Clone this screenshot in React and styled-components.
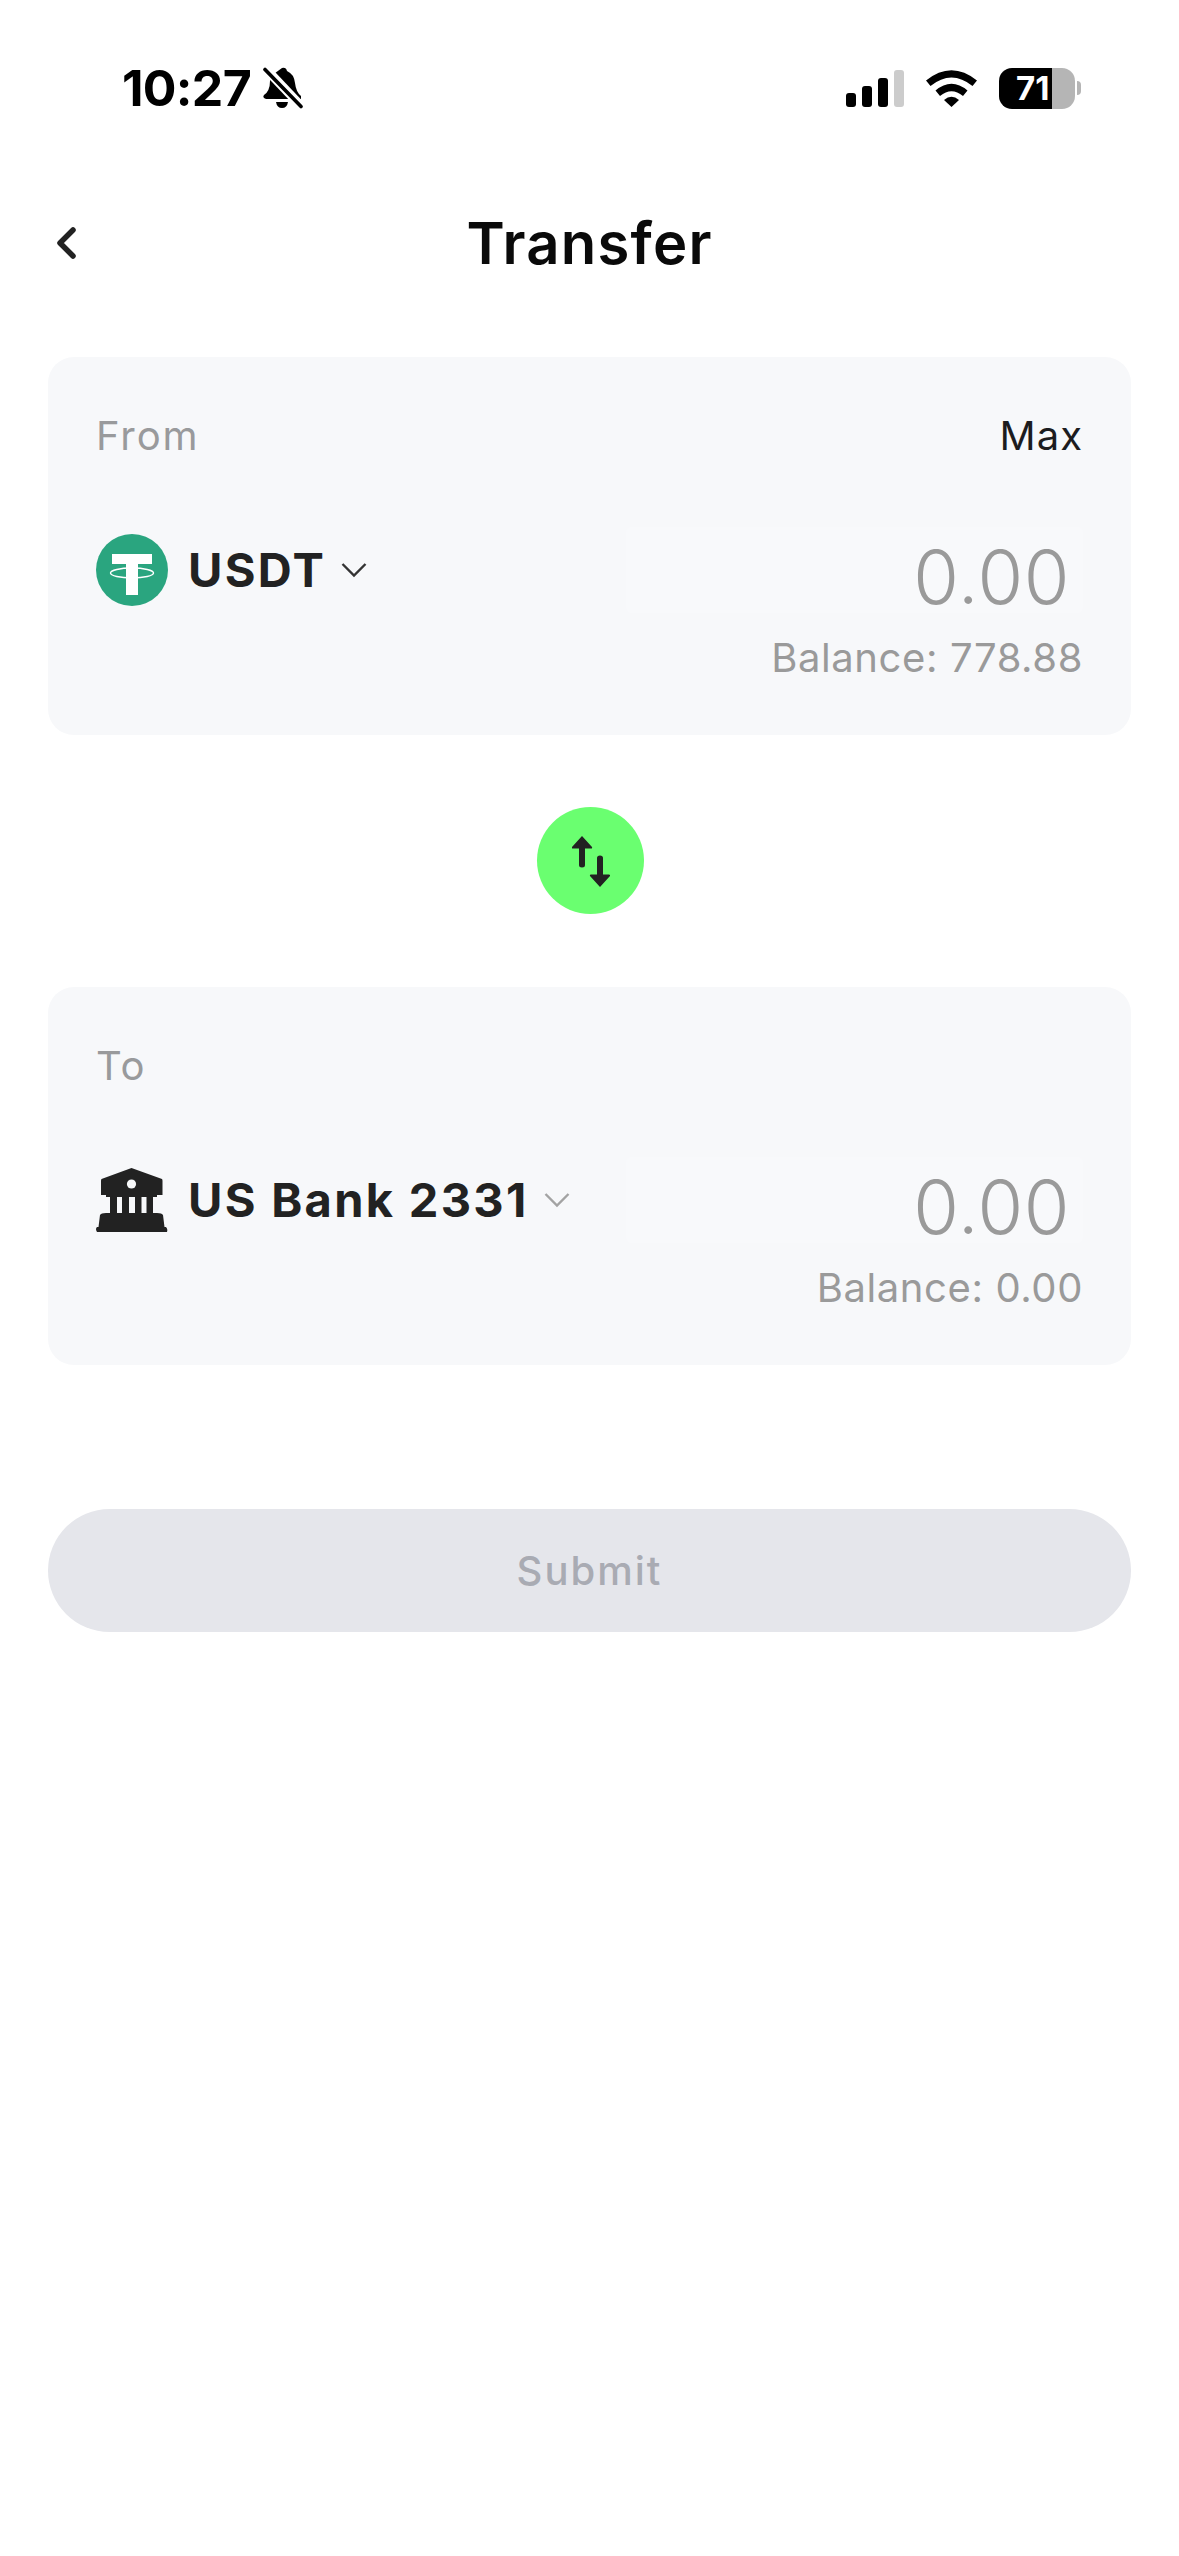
import styled, { createGlobalStyle } from "styled-components";

const GlobalStyle = createGlobalStyle`
  * { box-sizing: border-box; }
  html, body { margin: 0; padding: 0; background: #fff; }
  body { font-family: Inter, "Liberation Sans", sans-serif; }
`;

const Page = styled.div`
  width: 1179px;
  height: 2556px;
  background: #fff;
  overflow: hidden;
`;

const StatusBar = styled.div`
  height: 42px;
  margin-top: 67px;
  padding: 0 98px 0 122px;
  display: flex;
  align-items: center;
  justify-content: space-between;
`;

const StatusLeft = styled.div`
  display: flex;
  align-items: center;
  gap: 12px;
`;

const Time = styled.span`
  font-size: 50px;
  font-weight: 700;
  line-height: 42px;
  color: #000;
  letter-spacing: -0.7px;
`;

const StatusRight = styled.div`
  display: flex;
  align-items: center;
`;

const Signal = styled.svg`
  width: 58px;
  height: 37px;
  margin-right: 22px;
`;

const Wifi = styled.svg`
  width: 51px;
  height: 37px;
  margin-right: 22px;
`;

const Battery = styled.div`
  width: 76px;
  height: 41px;
  border-radius: 13px;
  background: linear-gradient(90deg, #000 53px, #b5b5b5 53px);
  color: #fff;
  font-size: 33px;
  font-weight: 700;
  line-height: 41px;
  padding-left: 17px;
`;

const BatteryCap = styled.div`
  width: 4px;
  height: 14px;
  margin-left: 2px;
  background: #b5b5b5;
  border-radius: 0 7px 7px 0;
`;

const Header = styled.header`
  height: 100px;
  margin-top: 84px;
  padding: 0 48px;
  display: grid;
  grid-template-columns: 1fr auto 1fr;
  align-items: center;
`;

const BackIcon = styled.svg`
  width: 20px;
  height: 32px;
  margin-left: 8px;
  display: block;
`;

const Title = styled.h1`
  margin: 0;
  font-size: 58px;
  font-weight: 600;
  color: #0a0a0a;
  letter-spacing: 1.2px;
`;

const Content = styled.main`
  margin-top: 64px;
  padding: 0 48px;
`;

const Card = styled.section`
  height: 378px;
  padding: 52px 48px 0 48px;
  border-radius: 26px;
  background: #f7f8fa;
`;

const CardTop = styled.div`
  height: 52px;
  display: flex;
  align-items: center;
  justify-content: space-between;
`;

const Label = styled.span`
  font-size: 40px;
  font-weight: 400;
  color: #999a9c;
  letter-spacing: 1.9px;
`;

const MaxLink = styled.span`
  font-size: 40px;
  font-weight: 400;
  color: #1c1c1e;
  letter-spacing: 1px;
`;

const SelectRow = styled.div`
  margin-top: 66px;
  display: flex;
  align-items: flex-start;
  justify-content: space-between;
`;

const Picker = styled.div`
  height: 72px;
  margin-top: 7px;
  display: flex;
  align-items: center;
`;

const AssetIcon = styled.svg`
  width: 72px;
  height: ${(p) => p.$h || 72}px;
  display: block;
  flex: none;
`;

const AssetName = styled.span`
  margin-left: 20px;
  font-size: 47px;
  font-weight: 700;
  color: #222;
  letter-spacing: 2.3px;
  line-height: 60px;
`;

const Chevron = styled.svg`
  width: 26px;
  height: 16px;
  margin-left: 15px;
  flex: none;
`;

const AmountBox = styled.div`
  width: 457px;
  height: 86px;
  padding: 7px 13px 0 0;
  background: #f8f9fb;
  border-radius: 6px;
  font-size: 74px;
  font-weight: 300;
  line-height: 86px;
  text-align: right;
  color: #9a9a9a;
  letter-spacing: 0.6px;
`;

const Balance = styled.div`
  margin-top: 20px;
  font-size: 40px;
  line-height: 50px;
  text-align: right;
  color: #9a9a9a;
  letter-spacing: 0.6px;
`;

const SwapRow = styled.div`
  padding: 72px 0 73px 2px;
  display: flex;
  justify-content: center;
`;

const SwapButton = styled.button`
  width: 107px;
  height: 107px;
  padding: 0;
  border: 0;
  border-radius: 50%;
  background: #6aff70;
  display: flex;
  align-items: center;
  justify-content: center;
`;

const SubmitButton = styled.button`
  display: block;
  width: 100%;
  height: 123px;
  margin-top: 144px;
  border: 0;
  border-radius: 62px;
  background: #e5e6eb;
  color: #a9abb3;
  font-family: inherit;
  font-size: 40px;
  font-weight: 500;
  letter-spacing: 2px;
`;

function TetherIcon() {
  return (
    <AssetIcon viewBox="0 0 72 72">
      <circle cx="36" cy="36" r="36" fill="#2aa57f" />
      <path d="M16 20h40v10H42v31H30V30H16z" fill="#fff" />
      <ellipse cx="36" cy="39" rx="21.5" ry="5" fill="none" stroke="#fff" strokeWidth="1.4" />
    </AssetIcon>
  );
}

function BankIcon() {
  return (
    <AssetIcon viewBox="0 0 72 64" $h={64}>
      <path
        d="M35.5 0 L66 11 Q66.5 11.5 66.5 13 V27 H61 V29 H57 V45 H61 Q66 45 67 47 L68.5 59 H70 Q72 61 71 64 H1 Q-1 61 1 59 H2.5 L4 47 Q5 45 10 45 H14 V29 H10 V27 H5 V13 Q5 11.5 5.5 11 Z"
        fill="#222"
      />
      <circle cx="35.5" cy="16" r="4.6" fill="#f7f8fa" />
      <path d="M21 29h5v16h-5zM33 29h6v16h-6zM45.500 29h5v16h-5z" fill="#f7f8fa" />
    </AssetIcon>
  );
}

function DownChevron({ color }) {
  return (
    <Chevron viewBox="0 0 26 16">
      <path d="M1.500 2 L13 13.500 L24.500 2" fill="none" stroke={color} strokeWidth="2.4" />
    </Chevron>
  );
}

function MutedBell() {
  return (
    <svg width="40" height="42" viewBox="0 0 40 42">
      <path
        d="M19 1 Q23 0 24 4 Q31 7 32 16 Q33 25 38 29 L38 32 L3 32 Q-1 31 1 28 Q7 24 7 14 L8 9 Z"
        fill="#000"
      />
      <path d="M13 35h12q-1 6-6 6t-6-6z" fill="#000" />
      <path d="M3 2 L39 40" stroke="#fff" strokeWidth="9" />
      <path d="M2 2.500 L38 39.500" stroke="#000" strokeWidth="3.600" strokeLinecap="round" />
    </svg>
  );
}

export default function App() {
  return (
    <Page>
      <GlobalStyle />
      <StatusBar>
        <StatusLeft>
          <Time>10:27</Time>
          <MutedBell />
        </StatusLeft>
        <StatusRight>
          <Signal viewBox="0 0 58 37">
            <rect x="0" y="23" width="10" height="14" rx="3" fill="#000" />
            <rect x="16" y="16" width="10" height="21" rx="3" fill="#000" />
            <rect x="32" y="8" width="10" height="29" rx="3" fill="#000" />
            <rect x="48" y="0" width="10" height="37" rx="3" fill="#ccc" />
          </Signal>
          <Wifi viewBox="0 0 51 37">
            <path d="M0 10.500 Q25.500 -10 51 10.500 L46.500 16 Q25.500 -1 4.500 16 Z" fill="#000" />
            <path d="M9.500 20.500 Q25.500 7 41.500 20.500 L37 26 Q25.500 16.500 14 26 Z" fill="#000" />
            <path d="M18 30 Q25.500 23.500 33 30 L25.500 37 Z" fill="#000" />
          </Wifi>
          <Battery>71</Battery>
          <BatteryCap />
        </StatusRight>
      </StatusBar>

      <Header>
        <BackIcon viewBox="0 0 20 32">
          <path d="M17 3 L4 16 L17 29" fill="none" stroke="#222" strokeWidth="5.500" strokeLinecap="round" strokeLinejoin="round" />
        </BackIcon>
        <Title>Transfer</Title>
      </Header>

      <Content>
        <Card>
          <CardTop>
            <Label>From</Label>
            <MaxLink>Max</MaxLink>
          </CardTop>
          <SelectRow>
            <Picker>
              <TetherIcon />
              <AssetName>USDT</AssetName>
              <DownChevron color="#333" />
            </Picker>
            <AmountBox>0.00</AmountBox>
          </SelectRow>
          <Balance>Balance: 778.88</Balance>
        </Card>

        <SwapRow>
          <SwapButton aria-label="Swap">
            <svg width="38" height="52" viewBox="0 0 38 52">
              <path d="M10 1 L20 12 Q20.500 13.500 19 13.500 H13 V30 Q13 32.500 10 32.500 Q7 32.500 7 30 V13.500 H1 Q-0.500 13.500 0 12 Z" fill="#222" />
              <path d="M28 52 L18 41 Q17.500 39.500 19 39.500 H25 V23 Q25 20.500 28 20.500 Q31 20.500 31 23 V39.500 H37 Q38.500 39.500 38 41 Z" fill="#222" />
            </svg>
          </SwapButton>
        </SwapRow>

        <Card>
          <CardTop>
            <Label>To</Label>
          </CardTop>
          <SelectRow>
            <Picker>
              <BankIcon />
              <AssetName>US Bank 2331</AssetName>
              <DownChevron color="#a3a3a3" />
            </Picker>
            <AmountBox>0.00</AmountBox>
          </SelectRow>
          <Balance>Balance: 0.00</Balance>
        </Card>

        <SubmitButton>Submit</SubmitButton>
      </Content>
    </Page>
  );
}
